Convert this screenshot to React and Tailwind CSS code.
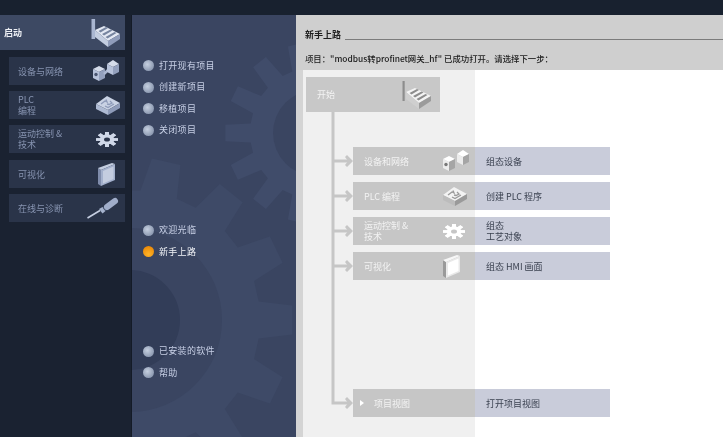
const F = { fontFamily: '"Noto Sans CJK SC","Liberation Sans",sans-serif' };

function Factory({ mono }) {
  const top = mono ? '#f4f4f4' : '#e3e8f3';
  const stripe = mono ? '#8d8d8d' : '#76849f';
  const left = mono ? '#cfcfcf' : '#c3cde0';
  const right = mono ? '#9b9b9b' : '#8f9cba';
  return (
    <svg width="30" height="28" viewBox="0 0 30 28">
      <rect x="0.5" y="0" width={mono ? 2.2 : 3.6} height="20" fill={mono ? '#8d8d8d' : '#a9b6d1'} />
      <path d="M4 11 L13 7 L29 15 L17 22 Z" fill={top} />
      <path d="M4 11 L17 22 L17 28 L4 18 Z" fill={left} />
      <path d="M17 22 L29 15 L29 20 L17 28 Z" fill={right} />
      <path d="M7.5 12 L15 8 L17 9 L9.5 13.5 Z M11 15 L19.5 10.5 L21.5 11.5 L13 16.5 Z M14.5 18 L23.5 13 L25.5 14 L16.5 19.5 Z" fill={stripe} />
    </svg>
  );
}
function Cubes({ mono }) {
  const a = mono ? '#ffffff' : '#d5dcea', b = mono ? '#a5a5a5' : '#93a0bd', c = mono ? '#ececec' : '#b7c2da';
  return (
    <svg width="27" height="22" viewBox="0 0 27 22">
      <path d="M0 9 L6 6 L12 9 L6 12 Z" fill={a} />
      <path d="M0 9 L6 12 L6 21 L0 18 Z" fill={c} />
      <path d="M6 12 L12 9 L12 18 L6 21 Z" fill={b} />
      <circle cx="3" cy="14.5" r="1.7" fill={mono ? '#777' : '#4a5671'} />
      <path d="M11 14 L16 9" stroke={mono ? 'transparent' : '#aab6d0'} strokeWidth="2.5" />
      <path d="M14 4 L20 0 L26 4 L20 7 Z" fill={a} />
      <path d="M14 4 L20 7 L20 15 L14 12 Z" fill={c} />
      <path d="M20 7 L26 4 L26 12 L20 15 Z" fill={b} />
    </svg>
  );
}
function Chip({ mono }) {
  const a = mono ? '#f3f3f3' : '#c9d2e4', b = mono ? '#9a9a9a' : '#8e9bb9', c = mono ? '#bcbcbc' : '#aebad3';
  return (
    <svg width="24" height="19" viewBox="0 0 24 19">
      <path d="M0 8 L11 0 L24 7 L12 14 Z" fill={a} />
      <path d="M0 8 L12 14 L12 19 L0 13 Z" fill={c} />
      <path d="M12 14 L24 7 L24 12 L12 19 Z" fill={b} />
      <path d="M5 8 L9 5 L11 6 L10 3.5 M14 5 L16 7 L13 8.5 L11 8 M9 10 L12 11.5 L18 8" stroke={b} strokeWidth="1.3" fill="none" />
    </svg>
  );
}
function Gear({ mono }) {
  const a = mono ? '#ffffff' : '#d0d8e8';
  return (
    <svg width="22" height="15" viewBox="0 0 22 15">
      <g transform="translate(11 7.5) scale(1 .68)" fill={a}>
        {[0, 45, 90, 135, 180, 225, 270, 315].map((r) => (
          <rect key={r} x="-2" y="-11" width="4" height="22" rx=".5" transform={`rotate(${r})`} />
        ))}
        <circle r="7.5" />
        <circle r="3" fill={mono ? '#c6c6c6' : '#2b354b'} />
      </g>
    </svg>
  );
}
function Panel({ mono }) {
  const a = mono ? '#ffffff' : '#c4cde0', b = mono ? '#9a9a9a' : '#7f8cab', c = mono ? '#e9e9e9' : '#a3b0cc';
  return (
    <svg width="17" height="23" viewBox="0 0 17 23">
      <path d="M0 5 L3 7 L3 23 L0 21 Z" fill={b} />
      <path d="M0 5 L14 0 L17 1 L3 7 Z" fill={mono ? '#f7f7f7' : '#c3cde0'} />
      <path d="M3 7 L17 1 L17 17 L3 23 Z" fill={c} />
      <path d="M5 8 L15.5 3.5 L15.5 16 L5 20.5 Z" fill={a} />
    </svg>
  );
}
function Screwdriver() {
  return (
    <svg width="33" height="22" viewBox="0 0 33 22">
      <path d="M0.5 21 L13 13.5" stroke="#c6cfe2" strokeWidth="1.6" />
      <path d="M12 12 L15.5 16.5 L18.5 14 L15.5 10 Z" fill="#a6b3cd" />
      <path d="M17 12.5 L20 10" stroke="#4d5a77" strokeWidth="4" />
      <path d="M20 10 L28 4" stroke="#a0adc9" strokeWidth="6" strokeLinecap="round" />
    </svg>
  );
}

function SideItem({ label, label2, icon, mb, iconClass }) {
  return (
    <div className={`h-[28px] bg-[#2a3449] ml-[9px] w-[116px] flex items-center justify-between pl-[9px] pr-[5px] ${mb}`}>
      <div className="text-[#8794b1] text-[9px] leading-[11px]">
        <div>{label}</div>
        {label2 && <div>{label2}</div>}
      </div>
      <div className={`flex justify-end items-center w-[33px] ${iconClass || ''}`}>{icon}</div>
    </div>
  );
}

function Bullet({ label, active, mb = 'mb-[8.5px]' }) {
  return (
    <div className={`flex items-center h-[13px] ${mb}`}>
      <span
        className={`w-[11px] h-[11px] rounded-full ml-[11px] ${
          active
            ? 'bg-[radial-gradient(circle_at_50%_75%,#ffb428,#e67f00)]'
            : 'bg-[radial-gradient(circle_at_40%_40%,#c5cfdf,#76849f)]'
        }`}
      />
      <span className={`ml-[5px] text-[9px] tracking-[0.3px] ${active ? 'text-[#f2f4f8]' : 'text-[#c8d0e6]'}`}>{label}</span>
    </div>
  );
}

function Row({ label, label2, icon, desc, desc2, mb, indent }) {
  return (
    <div className={`h-[28px] w-[257px] flex ${mb}`}>
      <div className="w-[122px] bg-[#c6c6c6] flex items-center relative pl-[11px] text-[#f3f3f3] text-[9px] leading-[11px]">
        {indent && <span className="w-0 h-0 border-y-[3.5px] border-y-transparent border-l-[4px] border-l-white mr-[10px] ml-[-4px]" />}
        <div>
          <div>{label}</div>
          {label2 && <div>{label2}</div>}
        </div>
        {icon && <div className="absolute left-[90px] top-0 h-full flex items-center">{icon}</div>}
      </div>
      <div className="flex-1 bg-[#c9ccda] flex items-center pl-[11px] text-[#3a4150] text-[9px] leading-[11px]">
        <div>
          <div>{desc}</div>
          {desc2 && <div>{desc2}</div>}
        </div>
      </div>
    </div>
  );
}

function gearPath(cx, cy, root, outer, n) {
  const pts = [];
  const step = (Math.PI * 2) / n;
  for (let i = 0; i < n; i++) {
    const a = i * step;
    const p = (r, o) => `${(cx + r * Math.cos(a + o)).toFixed(1)},${(cy + r * Math.sin(a + o)).toFixed(1)}`;
    pts.push(p(root, -step * 0.32), p(outer, -step * 0.2), p(outer, step * 0.2), p(root, step * 0.32));
  }
  return `M${pts.join(' L')} Z`;
}

function BackGear() {
  return (
    <svg className="absolute left-0 top-0 pointer-events-none" width="164" height="422" viewBox="0 0 164 422">
      <g transform="translate(-132 -15)">
        <path d={gearPath(130, 320, 130, 163, 14)} fill="#3e4a67" />
        <circle cx="130" cy="320" r="92" fill="#3a4561" />
        <circle cx="130" cy="320" r="50" fill="#323d58" />
        <path d={gearPath(316, 133, 66, 91, 14)} fill="#404c6a" />
        <circle cx="316" cy="133" r="43" fill="#3a4561" />
      </g>
    </svg>
  );
}

export default function App() {
  return (
    <div className="w-[723px] h-[437px] overflow-hidden flex flex-col bg-[#1a2232] blur-[0.35px]" style={F}>
      <div className="h-[15px] bg-[#18212f] shrink-0" />
      <div className="flex flex-1 min-h-0">
        <div className="w-[132px] shrink-0 bg-[#1a2231] border-r border-[#141b27]">
          <div className="w-[125px] h-[35px] bg-[#3d4963] flex items-center justify-between pl-[4px] pr-[4px] mb-[7px]">
            <span className="text-[#eef0f5] text-[9px] font-bold">启动</span>
            <Factory />
          </div>
          <SideItem label="设备与网络" icon={<Cubes />} mb="mb-[6px]" />
          <SideItem label="PLC" label2="编程" icon={<Chip />} mb="mb-[6px]" />
          <SideItem label="运动控制 &" label2="技术" icon={<Gear />} mb="mb-[7px]" iconClass="pr-[2px]" />
          <SideItem label="可视化" icon={<Panel />} mb="mb-[6px]" iconClass="pr-[5px]" />
          <SideItem label="在线与诊断" icon={<Screwdriver />} />
        </div>

        <div className="w-[164px] shrink-0 bg-[#3a4561] relative overflow-hidden pt-[44px]">
          <BackGear />
          <div className="relative">
            <Bullet label="打开现有项目" />
            <Bullet label="创建新项目" />
            <Bullet label="移植项目" />
            <Bullet label="关闭项目" mb="mb-[87px]" />
            <Bullet label="欢迎光临" />
            <Bullet label="新手上路" active mb="mb-[86.5px]" />
            <Bullet label="已安装的软件" />
            <Bullet label="帮助" />
          </div>
        </div>

        <div className="flex-1 flex flex-col min-w-0">
          <div className="h-[55px] bg-[#cfcfcf] shrink-0 pl-[9px] pt-[12px]">
            <div className="flex items-end h-[14px]">
              <span className="text-[9px] font-bold text-[#1f1f1f] leading-[12px]">新手上路</span>
              <span className="flex-1 ml-[4px] border-b border-[#7c7c7c] mb-[1px]" />
            </div>
            <div className="mt-[10px] text-[8.4px] leading-[14px] text-[#1c1c1c] font-medium">
              项目：&quot;modbus转profinet网关_hf&quot; 已成功打开。请选择下一步：
            </div>
          </div>
          <div className="flex-1 flex bg-[#d4d4d4] min-h-0">
            <div className="w-[7px] shrink-0" />
            <div className="flex-1 relative bg-[linear-gradient(90deg,#f0f0f0_0,#f0f0f0_172px,#ffffff_172px)] pt-[7px] pl-[3px]">
              <svg className="absolute left-[24px] top-[42px]" width="34" height="300" viewBox="0 0 34 300">
                <g stroke="#c6c6c6" strokeWidth="3" fill="none">
                  <path d="M6 0 V291 H22" />
                  <path d="M6 49 H22 M6 84 H22 M6 119 H22 M6 154 H22" />
                </g>
                <g fill="#c6c6c6">
                  <path d="M20 43 L26 49 L20 55 L18 53 L21 49 L18 45 Z" />
                  <path d="M20 78 L26 84 L20 90 L18 88 L21 84 L18 80 Z" />
                  <path d="M20 113 L26 119 L20 125 L18 123 L21 119 L18 115 Z" />
                  <path d="M20 148 L26 154 L20 160 L18 158 L21 154 L18 150 Z" />
                  <path d="M20 285 L26 291 L20 297 L18 295 L21 291 L18 287 Z" />
                </g>
              </svg>
              <div className="w-[134px] h-[35px] bg-[#c8c8c8] flex items-center justify-between pl-[11px] pr-[8px] text-[#f3f3f3] text-[9px] mb-[35px] relative">
                <span>开始</span>
                <Factory mono />
              </div>
              <div className="ml-[47px] relative">
                <Row label="设备和网络" icon={<Cubes mono />} desc="组态设备" mb="mb-[7px]" />
                <Row label="PLC 编程" icon={<Chip mono />} desc="创建 PLC 程序" mb="mb-[7px]" />
                <Row label="运动控制 &" label2="技术" icon={<Gear mono />} desc="组态" desc2="工艺对象" mb="mb-[7px]" />
                <Row label="可视化" icon={<Panel mono />} desc="组态 HMI 画面" mb="mb-[109px]" />
                <Row label="项目视图" indent desc="打开项目视图" />
              </div>
            </div>
          </div>
        </div>
      </div>
    </div>
  );
}
